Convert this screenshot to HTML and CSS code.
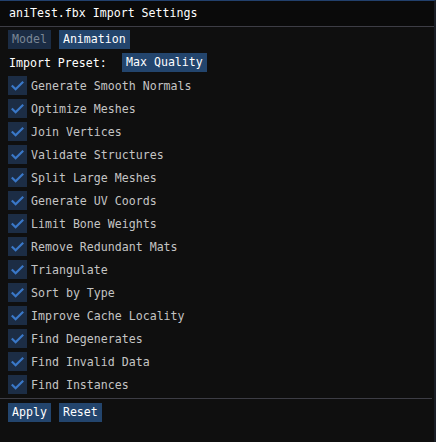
FILE: index.html
```html
<!DOCTYPE html>
<html>
<head>
<meta charset="utf-8">
<link rel="stylesheet" href="styles.css">
</head>
<body>
<div class="window">
  <div class="titlebar">aniTest.fbx Import Settings</div>
  <div class="content">
    <div class="row">
      <span class="btn dim">Model</span>
      <span class="btn">Animation</span>
    </div>
    <div class="row">
      <span class="label preset">Import Preset:</span>
      <span class="btn">Max Quality</span>
    </div>
    <div class="checks">
      <div class="check"><span class="box"><svg viewBox="0 0 19 19" width="19" height="19"><polyline points="3.8,9.5 7.6,13.3 15.2,5.7" /></svg></span><span class="label">Generate Smooth Normals</span></div>
      <div class="check"><span class="box"><svg viewBox="0 0 19 19" width="19" height="19"><polyline points="3.8,9.5 7.6,13.3 15.2,5.7" /></svg></span><span class="label">Optimize Meshes</span></div>
      <div class="check"><span class="box"><svg viewBox="0 0 19 19" width="19" height="19"><polyline points="3.8,9.5 7.6,13.3 15.2,5.7" /></svg></span><span class="label">Join Vertices</span></div>
      <div class="check"><span class="box"><svg viewBox="0 0 19 19" width="19" height="19"><polyline points="3.8,9.5 7.6,13.3 15.2,5.7" /></svg></span><span class="label">Validate Structures</span></div>
      <div class="check"><span class="box"><svg viewBox="0 0 19 19" width="19" height="19"><polyline points="3.8,9.5 7.6,13.3 15.2,5.7" /></svg></span><span class="label">Split Large Meshes</span></div>
      <div class="check"><span class="box"><svg viewBox="0 0 19 19" width="19" height="19"><polyline points="3.8,9.5 7.6,13.3 15.2,5.7" /></svg></span><span class="label">Generate UV Coords</span></div>
      <div class="check"><span class="box"><svg viewBox="0 0 19 19" width="19" height="19"><polyline points="3.8,9.5 7.6,13.3 15.2,5.7" /></svg></span><span class="label">Limit Bone Weights</span></div>
      <div class="check"><span class="box"><svg viewBox="0 0 19 19" width="19" height="19"><polyline points="3.8,9.5 7.6,13.3 15.2,5.7" /></svg></span><span class="label">Remove Redundant Mats</span></div>
      <div class="check"><span class="box"><svg viewBox="0 0 19 19" width="19" height="19"><polyline points="3.8,9.5 7.6,13.3 15.2,5.7" /></svg></span><span class="label">Triangulate</span></div>
      <div class="check"><span class="box"><svg viewBox="0 0 19 19" width="19" height="19"><polyline points="3.8,9.5 7.6,13.3 15.2,5.7" /></svg></span><span class="label">Sort by Type</span></div>
      <div class="check"><span class="box"><svg viewBox="0 0 19 19" width="19" height="19"><polyline points="3.8,9.5 7.6,13.3 15.2,5.7" /></svg></span><span class="label">Improve Cache Locality</span></div>
      <div class="check"><span class="box"><svg viewBox="0 0 19 19" width="19" height="19"><polyline points="3.8,9.5 7.6,13.3 15.2,5.7" /></svg></span><span class="label">Find Degenerates</span></div>
      <div class="check"><span class="box"><svg viewBox="0 0 19 19" width="19" height="19"><polyline points="3.8,9.5 7.6,13.3 15.2,5.7" /></svg></span><span class="label">Find Invalid Data</span></div>
      <div class="check"><span class="box"><svg viewBox="0 0 19 19" width="19" height="19"><polyline points="3.8,9.5 7.6,13.3 15.2,5.7" /></svg></span><span class="label">Find Instances</span></div>
    </div>
    <div class="separator"></div>
    <div class="row">
      <span class="btn">Apply</span>
      <span class="btn">Reset</span>
    </div>
  </div>
</div>
</body>
</html>
```

FILE: styles.css
```css
html, body {
  margin: 0;
  padding: 0;
  background: #0f0f0f;
}
.window {
  width: 436px;
  height: 442px;
  box-sizing: border-box;
  border-top: 1px solid #22406c;
  border-right: 2px solid #1a1e26;
  background: #0f0f0f;
  font-family: "DejaVu Sans Mono", "Liberation Mono", monospace;
  font-size: 11.6px;
  color: #e6e6e6;
  overflow: hidden;
}
.titlebar {
  height: 25px;
  line-height: 25px;
  padding-left: 9px;
  background: #0a0a0a;
  color: #ffffff;
  border-bottom: 1px solid #3d3d45;
}
.content {
  padding: 3px 0 0 8px;
  display: flex;
  flex-direction: column;
  gap: 4px;
}
.row {
  display: flex;
  gap: 8px;
  height: 19px;
  align-items: center;
}
.btn {
  height: 19px;
  line-height: 19px;
  padding: 0 4px;
  background: #23456d;
  color: #ffffff;
}
.btn.dim {
  background: #1b2c44;
  color: #7a8694;
}
.label.preset {
  width: 105px;
  padding-left: 1px;
  color: #ffffff;
}
.checks {
  display: flex;
  flex-direction: column;
  gap: 4px;
}
.check {
  display: flex;
  align-items: center;
  gap: 4px;
  height: 19px;
}
.box {
  width: 19px;
  height: 19px;
  background: #1c2d45;
  display: block;
}
.box svg {
  display: block;
}
.box polyline {
  fill: none;
  stroke: #3a78c8;
  stroke-width: 2.2;
  stroke-linejoin: miter;
}
.check .label {
  color: #c4c4c4;
}
.separator {
  height: 1px;
  background: #3d3d45;
  margin: 0 2px 0 -8px;
}
```
